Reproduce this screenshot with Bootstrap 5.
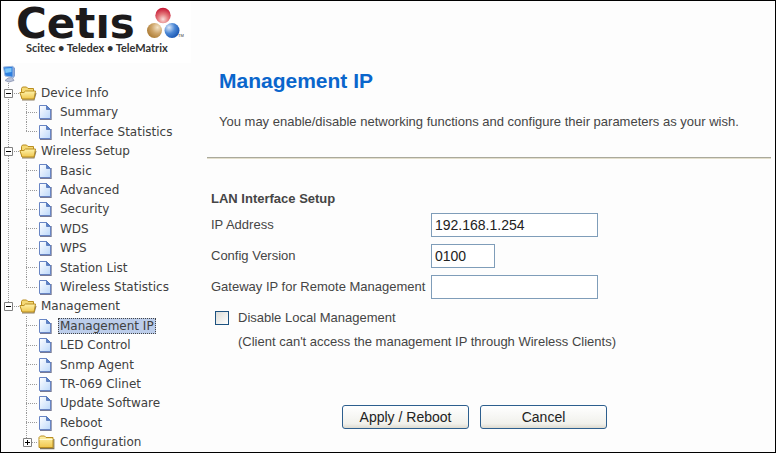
<!DOCTYPE html>
<html lang="en">
<head>
<meta charset="utf-8">
<meta name="viewport" content="width=device-width, initial-scale=1">
<title>Management IP</title>
<link href="https://cdn.jsdelivr.net/npm/bootstrap@5.3.0/dist/css/bootstrap.min.css" rel="stylesheet">
<style>
  body { font-family: "Liberation Sans", Arial, sans-serif; font-size: 13px; line-height: 16px; color: #454545; background: #fdfdfd; }
  .frame { border: 1px solid #000; }
  .side { width: 206px; }
  .brand { height: 63px; }
  .brand svg { display: block; }

  /* Navigation tree: every node is one equal row of a single grid */
  .tree { display: grid; grid-auto-rows: minmax(19px, 1fr); font-family: "DejaVu Sans", Verdana, sans-serif; font-size: 12px; line-height: 16px; }
  .tree ul, .tree li { display: contents; }
  .node { display: flex; align-items: center; min-height: 0; }
  .node a { color: #404040; text-decoration: none; white-space: nowrap; padding: 0 2px; }
  .node a:hover { text-decoration: underline; }
  .node a.current { background: #bccdea; outline: 1px dotted #444; outline-offset: -1px; }
  .node .folder + a { margin-left: 2px; }
  .node .folder.sub + a { margin-left: 3px; }
  .node .sheet + a { margin-left: 6px; }
  .rail { align-self: stretch; display: flex; align-items: center; justify-content: center; flex: none; width: 18px; --dots: repeating-linear-gradient(#9a9a9a 0 1px, transparent 1px 2px); --dash: repeating-linear-gradient(90deg, #9a9a9a 0 1px, transparent 1px 2px); background-repeat: no-repeat; }
  .first { width: 18px; padding-right: 3px; }
  .first.line { background-image: var(--dots); background-size: 1px 100%; background-position: 7px 0; }
  .first.mid { background-image: var(--dots), var(--dash); background-size: 1px 100%, 11px 1px; background-position: 7px 0, 7px 50%; }
  .first.end { background-image: var(--dots), var(--dash); background-size: 1px 50%, 11px 1px; background-position: 7px 0, 7px 50%; }
  .second { width: 19px; padding-right: 3px; }
  .second { background-image: var(--dots), var(--dash); background-size: 1px 100%, 12px 1px; background-position: 7px 0, 7px 50%; }
  .second.end { background-size: 1px 50%, 12px 1px; }
  .toggler { width: 9px; height: 9px; padding: 0; border: 0; background: none; display: flex; flex: none; }
  .folder, .sheet { flex: none; }

  h1 { font-size: 21px; line-height: 24px; font-weight: bold; color: #0a66cc; }
  .rule { height: 2px; background: #aaa99c; border-bottom: 1px solid #e4dfcc; opacity: 1; border-top: 0; }
  .intro { padding: 68px 12px 0; }
  .intro p { margin: 20px 0 26px; line-height: 18px; }
  .fields { display: grid; grid-template-columns: 220px minmax(0, 1fr); row-gap: 7px; align-items: center; }
  .settings { padding: 32px 4px 0; }
  .settings h2 { font-size: 13px; line-height: 16px; font-weight: bold; margin: 0 0 6px; }
  .fields .form-control { height: 24px; width: 167px; padding: 0 3px; border: 1px solid #7f9db9; border-radius: 0; font-size: 14px; line-height: 20px; color: #222; background: #fff; }
  .fields .form-control.short { width: 64px; }
  .option .form-check-input { width: 14px; height: 14px; margin: 0; border: 1px solid #1d5280; border-radius: 0; background: linear-gradient(135deg, #dcdcd7, #fff); }
  .option { gap: 9px; padding: 11px 0 8px 4px; }
  .note { padding-left: 27px; }
  .actions { gap: 11px; padding: 55px 0 22px 131px; }
  .actions .btn { width: 127px; height: 24px; padding: 0; font-size: 14px; line-height: 20px; color: #222; border: 1px solid #2d5f8e; border-radius: 3px; background: linear-gradient(#fff, #f1f1ec 80%, #dedbd0); }
</style>
</head>
<body>
<svg width="0" height="0" class="position-absolute" aria-hidden="true">
  <defs>
    <linearGradient id="paper" x1="0" y1="0" x2="1" y2="1"><stop offset="0" stop-color="#fff"/><stop offset="1" stop-color="#bcd8fa"/></linearGradient>
    <linearGradient id="gold" x1="0" y1="0" x2="0" y2="1"><stop offset="0" stop-color="#fff3ac"/><stop offset="1" stop-color="#efc64c"/></linearGradient>
    <radialGradient id="red" cx=".5" cy=".75" r=".75"><stop offset="0" stop-color="#fae0dc"/><stop offset=".45" stop-color="#e47a7c"/><stop offset="1" stop-color="#c41230"/></radialGradient>
    <radialGradient id="tan" cx=".7" cy=".3" r=".8"><stop offset="0" stop-color="#f4e4c8"/><stop offset=".5" stop-color="#cda468"/><stop offset="1" stop-color="#a97830"/></radialGradient>
    <radialGradient id="blue" cx=".3" cy=".3" r=".8"><stop offset="0" stop-color="#dce9fa"/><stop offset=".5" stop-color="#4a86d4"/><stop offset="1" stop-color="#1450ae"/></radialGradient>
    <symbol id="i-sheet" viewBox="0 0 14 16">
      <path d="M2 15.3h11V5" fill="none" stroke="#777b96" stroke-width="1.4"/>
      <path d="M1.5 1.5h7l4 4v9h-11z" fill="url(#paper)" stroke="#6885c4"/>
      <path d="M8.5 1.5v4h4z" fill="#5b82c8" stroke="#5274b8" stroke-width=".8"/>
    </symbol>
    <symbol id="i-open" viewBox="0 0 18 16">
      <path d="M3 14.8h12l2-7" fill="none" stroke="#8d7f63" stroke-width="1.2"/>
      <path d="M2.500 13V3.500l1-1.500h4L9 3.500h5.500V13z" fill="#f5d975" stroke="#b98d20"/>
      <path d="M3 14 .9 7.500h4L6.500 6h10L15 14z" fill="url(#gold)" stroke="#b98d20"/>
    </symbol>
    <symbol id="i-closed" viewBox="0 0 17 16">
      <path d="M2 14.600h13.800V5" fill="none" stroke="#7e7357" stroke-width="1.2"/>
      <path d="M1 13.500V3.500L2.500 2h4L8 3.500h7v10z" fill="url(#gold)" stroke="#b98d20"/>
      <path d="M1.500 5.500h13" stroke="#fffbd8"/>
    </symbol>
    <symbol id="i-minus" viewBox="0 0 9 9"><path d="M.5.5h8v8h-8z" fill="#fff" stroke="#808080"/><path d="M2 4.500h5" stroke="#000"/></symbol>
    <symbol id="i-plus" viewBox="0 0 9 9"><path d="M.5.5h8v8h-8z" fill="#fff" stroke="#808080"/><path d="M2 4.500h5M4.500 2v5" stroke="#000"/></symbol>
  </defs>
</svg>

<div class="frame d-flex min-vh-100">
  <aside class="side d-flex flex-column flex-shrink-0">
    <div class="brand">
      <svg width="190" height="62" viewBox="1 1 190 62" overflow="visible" role="img" aria-label="Cetis: Scitec, Teledex, TeleMatrix">
        <path d="M1 1h190v62H1z" fill="#fff"/>
        <text x="16" y="38" font-family="DejaVu Sans, sans-serif" font-weight="bold" font-size="42" fill="#1c1a1b">Cetıs</text>
        <circle cx="163" cy="15.500" r="7.700" fill="url(#red)"/>
        <circle cx="154.500" cy="30.500" r="7.500" fill="url(#tan)"/>
        <circle cx="172" cy="30.500" r="7.500" fill="url(#blue)"/>
        <text x="178" y="37" font-family="Liberation Sans, sans-serif" font-size="4" fill="#333">TM</text>
        <text x="26" y="52" font-family="Lato, sans-serif" font-weight="bold" font-size="11" fill="#333">Scitec • Teledex • TeleMatrix</text>
      </svg>
    </div>
    <nav class="flex-grow-1 d-flex flex-column" aria-label="Main">
      <ul class="tree list-unstyled m-0 flex-grow-1">
        <li><div class="node">
          <svg width="16" height="18" viewBox="0 0 16 18" aria-hidden="true">
            <path d="M4 15.500 8 17l5-1.500-2-3-4 .5z" fill="#b9c3da" stroke="#8791ae" stroke-width=".8"/>
            <path d="M12 1.500 14 3v8l-2 2.500z" fill="#7d9bd0"/>
            <path d="M2.500 2 12 1.300v11L4 11z" fill="#2d7fe0" stroke="#9db7df"/>
            <path d="M4 3.500 10.500 3v4L4.500 8z" fill="#7cc6f8"/>
          </svg></div></li>
        <li><div class="node"><span class="rail first mid"><button class="toggler" type="button" aria-label="Collapse Device Info"><svg width="9" height="9"><use href="#i-minus"/></svg></button></span><svg class="folder" width="18" height="16" aria-hidden="true"><use href="#i-open"/></svg><a href="#">Device Info</a></div>
          <ul>
            <li><div class="node"><span class="rail first line"></span><span class="rail second"></span><svg class="sheet" width="14" height="16" aria-hidden="true"><use href="#i-sheet"/></svg><a href="#">Summary</a></div></li>
            <li><div class="node"><span class="rail first line"></span><span class="rail second end"></span><svg class="sheet" width="14" height="16" aria-hidden="true"><use href="#i-sheet"/></svg><a href="#">Interface Statistics</a></div></li>
          </ul></li>
        <li><div class="node"><span class="rail first mid"><button class="toggler" type="button" aria-label="Collapse Wireless Setup"><svg width="9" height="9"><use href="#i-minus"/></svg></button></span><svg class="folder" width="18" height="16" aria-hidden="true"><use href="#i-open"/></svg><a href="#">Wireless Setup</a></div>
          <ul>
            <li><div class="node"><span class="rail first line"></span><span class="rail second"></span><svg class="sheet" width="14" height="16" aria-hidden="true"><use href="#i-sheet"/></svg><a href="#">Basic</a></div></li>
            <li><div class="node"><span class="rail first line"></span><span class="rail second"></span><svg class="sheet" width="14" height="16" aria-hidden="true"><use href="#i-sheet"/></svg><a href="#">Advanced</a></div></li>
            <li><div class="node"><span class="rail first line"></span><span class="rail second"></span><svg class="sheet" width="14" height="16" aria-hidden="true"><use href="#i-sheet"/></svg><a href="#">Security</a></div></li>
            <li><div class="node"><span class="rail first line"></span><span class="rail second"></span><svg class="sheet" width="14" height="16" aria-hidden="true"><use href="#i-sheet"/></svg><a href="#">WDS</a></div></li>
            <li><div class="node"><span class="rail first line"></span><span class="rail second"></span><svg class="sheet" width="14" height="16" aria-hidden="true"><use href="#i-sheet"/></svg><a href="#">WPS</a></div></li>
            <li><div class="node"><span class="rail first line"></span><span class="rail second"></span><svg class="sheet" width="14" height="16" aria-hidden="true"><use href="#i-sheet"/></svg><a href="#">Station List</a></div></li>
            <li><div class="node"><span class="rail first line"></span><span class="rail second end"></span><svg class="sheet" width="14" height="16" aria-hidden="true"><use href="#i-sheet"/></svg><a href="#">Wireless Statistics</a></div></li>
          </ul></li>
        <li><div class="node"><span class="rail first end"><button class="toggler" type="button" aria-label="Collapse Management"><svg width="9" height="9"><use href="#i-minus"/></svg></button></span><svg class="folder" width="18" height="16" aria-hidden="true"><use href="#i-open"/></svg><a href="#">Management</a></div>
          <ul>
            <li><div class="node"><span class="rail first"></span><span class="rail second"></span><svg class="sheet" width="14" height="16" aria-hidden="true"><use href="#i-sheet"/></svg><a href="#" class="current" aria-current="page">Management IP</a></div></li>
            <li><div class="node"><span class="rail first"></span><span class="rail second"></span><svg class="sheet" width="14" height="16" aria-hidden="true"><use href="#i-sheet"/></svg><a href="#">LED Control</a></div></li>
            <li><div class="node"><span class="rail first"></span><span class="rail second"></span><svg class="sheet" width="14" height="16" aria-hidden="true"><use href="#i-sheet"/></svg><a href="#">Snmp Agent</a></div></li>
            <li><div class="node"><span class="rail first"></span><span class="rail second"></span><svg class="sheet" width="14" height="16" aria-hidden="true"><use href="#i-sheet"/></svg><a href="#">TR-069 Clinet</a></div></li>
            <li><div class="node"><span class="rail first"></span><span class="rail second"></span><svg class="sheet" width="14" height="16" aria-hidden="true"><use href="#i-sheet"/></svg><a href="#">Update Software</a></div></li>
            <li><div class="node"><span class="rail first"></span><span class="rail second"></span><svg class="sheet" width="14" height="16" aria-hidden="true"><use href="#i-sheet"/></svg><a href="#">Reboot</a></div></li>
            <li><div class="node"><span class="rail first"></span><span class="rail second end"><button class="toggler" type="button" aria-label="Expand Configuration"><svg width="9" height="9"><use href="#i-plus"/></svg></button></span><svg class="folder sub" width="17" height="16" aria-hidden="true"><use href="#i-closed"/></svg><a href="#">Configuration</a></div></li>
          </ul></li>
      </ul>
    </nav>
  </aside>

  <main class="flex-grow-1 pe-1">
    <div class="intro">
      <h1 class="m-0">Management IP</h1>
      <p>You may enable/disable networking functions and configure their parameters as your wish.</p>
    </div>
    <hr class="rule m-0">
    <form class="settings">
      <h2>LAN Interface Setup</h2>
      <div class="fields">
        <label for="ip">IP Address</label>
        <input class="form-control" id="ip" type="text" value="192.168.1.254">
        <label for="version">Config Version</label>
        <input class="form-control short" id="version" type="text" value="0100">
        <label for="gateway">Gateway IP for Remote Management</label>
        <input class="form-control" id="gateway" type="text">
      </div>
      <div class="option d-flex align-items-center">
        <input class="form-check-input" id="local" type="checkbox">
        <label for="local">Disable Local Management</label>
      </div>
      <div class="note">(Client can't access the management IP through Wireless Clients)</div>
      <div class="actions d-flex flex-wrap">
        <button class="btn" type="submit">Apply / Reboot</button>
        <button class="btn" type="reset">Cancel</button>
      </div>
    </form>
  </main>
</div>
<script src="https://cdn.jsdelivr.net/npm/bootstrap@5.3.0/dist/js/bootstrap.bundle.min.js"></script>
</body>
</html>
